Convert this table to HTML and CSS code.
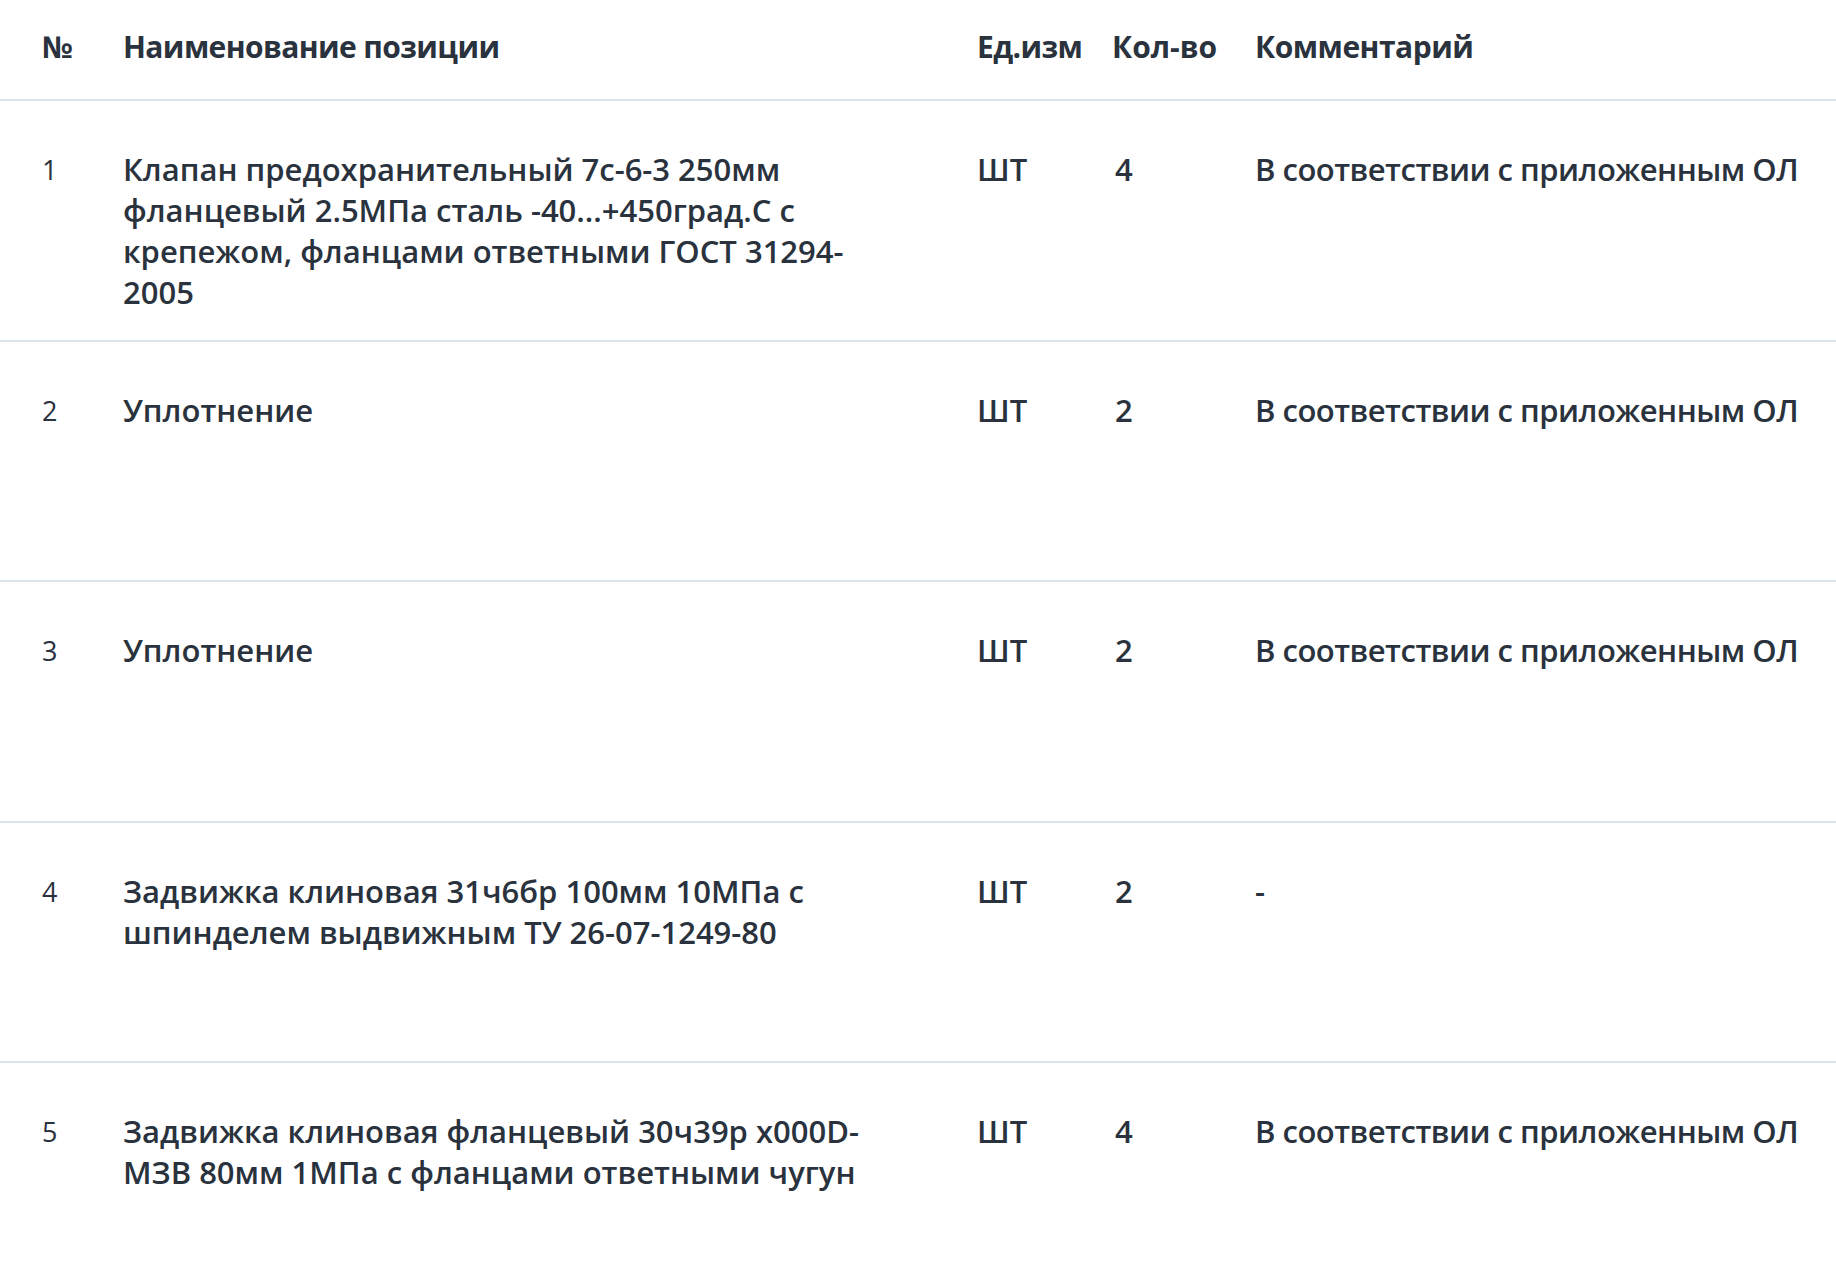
FILE: index.html
```html
<!DOCTYPE html>
<html lang="ru">
<head>
<meta charset="utf-8">
<title>Позиции</title>
<link rel="stylesheet" href="styles.css">
</head>
<body>
<div class="table">
  <div class="row head">
    <div class="c num">№</div>
    <div class="c name">Наименование позиции</div>
    <div class="c unit">Ед.изм</div>
    <div class="c qty">Кол-во</div>
    <div class="c comment">Комментарий</div>
  </div>
  <div class="row">
    <div class="c num">1</div>
    <div class="c name">Клапан предохранительный 7с-6-3 250мм фланцевый 2.5МПа сталь -40...+450град.С с крепежом, фланцами ответными ГОСТ 31294-2005</div>
    <div class="c unit">ШТ</div>
    <div class="c qty">4</div>
    <div class="c comment">В соответствии с приложенным ОЛ</div>
  </div>
  <div class="row">
    <div class="c num">2</div>
    <div class="c name">Уплотнение</div>
    <div class="c unit">ШТ</div>
    <div class="c qty">2</div>
    <div class="c comment">В соответствии с приложенным ОЛ</div>
  </div>
  <div class="row">
    <div class="c num">3</div>
    <div class="c name">Уплотнение</div>
    <div class="c unit">ШТ</div>
    <div class="c qty">2</div>
    <div class="c comment">В соответствии с приложенным ОЛ</div>
  </div>
  <div class="row">
    <div class="c num">4</div>
    <div class="c name">Задвижка клиновая 31ч6бр 100мм 10МПа с шпинделем выдвижным ТУ 26-07-1249-80</div>
    <div class="c unit">ШТ</div>
    <div class="c qty">2</div>
    <div class="c comment">-</div>
  </div>
  <div class="row">
    <div class="c num">5</div>
    <div class="c name">Задвижка клиновая фланцевый 30ч39р х000D-МЗВ 80мм 1МПа с фланцами ответными чугун</div>
    <div class="c unit">ШТ</div>
    <div class="c qty">4</div>
    <div class="c comment">В соответствии с приложенным ОЛ</div>
  </div>
</div>
</body>
</html>
```
FILE: styles.css
```css
html, body {
  margin: 0;
  padding: 0;
  background: #ffffff;
}
body {
  font-family: "Open Sans", "Noto Sans", sans-serif;
  color: #29323d;
}
.table {
  width: 100%;
}
.row {
  display: grid;
  grid-template-columns: 81px 854px 135px 143px 1fr;
  padding-left: 42px;
  box-sizing: border-box;
  height: 240.5px;
  padding-top: 48px;
  border-bottom: 2px solid #dde5ec;
  font-size: 31px;
  font-weight: 600;
  line-height: 41px;
}
.row.head {
  height: 101px;
  padding-top: 26px;
  font-weight: 700;
  font-size: 30px;
  letter-spacing: -0.6px;
}
.c {
  min-width: 0;
}
.name {
  max-width: 780px;
}
.qty {
  padding-left: 3px;
}
.head .qty {
  padding-left: 0;
  letter-spacing: 0;
}
.comment {
  letter-spacing: -0.5px;
}
.num {
  font-weight: 400;
  font-size: 27px;
}
.head .num {
  font-weight: 700;
  font-size: 30px;
}
```
